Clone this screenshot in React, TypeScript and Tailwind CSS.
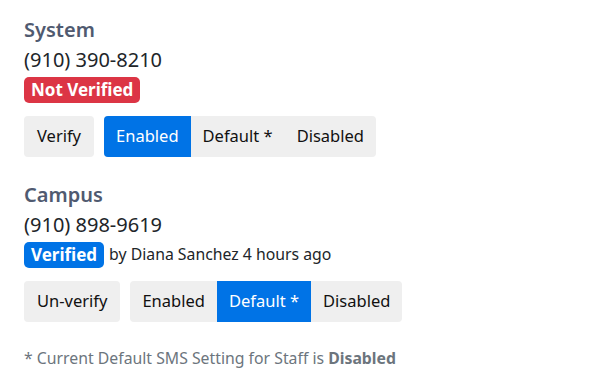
import React from "react";

const font = { fontFamily: '"Noto Sans", "Open Sans", sans-serif' };

function Group({ active }: { active: number }) {
  const items = ["Enabled", "Default *", "Disabled"];
  return (
    <div className="flex rounded-[4px] overflow-hidden bg-[#efefef]">
      {items.map((t, i) => (
        <div
          key={t}
          className={
            "h-[41px] px-[12px] flex items-center text-[16.5px] " +
            (i === active ? "bg-[#0073e6] text-white" : "text-[#111]")
          }
        >
          {t}
        </div>
      ))}
    </div>
  );
}

function Section({
  title,
  phone,
  verified,
  action,
  active,
}: {
  title: string;
  phone: string;
  verified: boolean;
  action: string;
  active: number;
}) {
  return (
    <div className="flex flex-col">
      <div className="text-[20px] leading-[28px] font-semibold text-[#505a70]">{title}</div>
      <div className="text-[20px] leading-[31px] text-[#212529]">{phone}</div>
      <div className="flex items-center mt-[2px] h-[26px]">
        {verified ? (
          <span className="h-[26px] px-[7px] flex items-center rounded-[5px] bg-[#0073e6] text-white font-bold text-[17px]">
            Verified
          </span>
        ) : (
          <span className="h-[26px] px-[7px] flex items-center rounded-[5px] bg-[#dc3545] text-white font-bold text-[17px]">
            Not Verified
          </span>
        )}
        {verified && (
          <span className="ml-[5px] text-[15.8px] text-[#212529]">by Diana Sanchez 4 hours ago</span>
        )}
      </div>
      <div className="flex gap-[10px] mt-[13px]">
        <div className="h-[41px] px-[13px] flex items-center rounded-[4px] bg-[#efefef] text-[16.5px] text-[#111]">
          {action}
        </div>
        <Group active={active} />
      </div>
    </div>
  );
}

export default function App() {
  return (
    <div className="w-[591px] h-[390px] bg-white pl-[24px] pt-[16px]" style={font}>
      <div className="flex flex-col gap-[24px]">
        <Section title="System" phone="(910) 390-8210" verified={false} action="Verify" active={0} />
        <Section title="Campus" phone="(910) 898-9619" verified={true} action="Un-verify" active={1} />
      </div>
      <div className="mt-[25px] text-[15.8px] text-[#6c757d]">
        * Current Default SMS Setting for Staff is <span className="font-bold">Disabled</span>
      </div>
    </div>
  );
}
